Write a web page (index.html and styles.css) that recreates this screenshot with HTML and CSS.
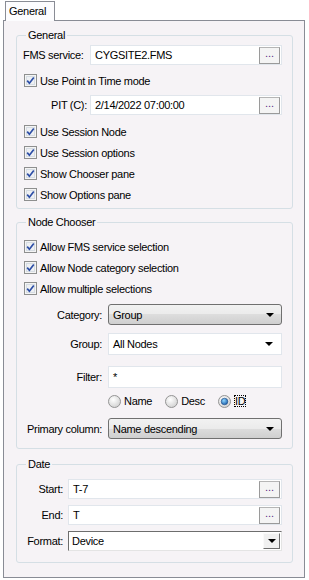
FILE: index.html
```html
<!DOCTYPE html>
<html>
<head>
  <title>Options</title>
  <link rel="stylesheet" href="styles.css">
</head>
<body>
  <div class="tabs">
    <div class="tab active">General</div>
  </div>
  <div class="panel">
    <fieldset class="group general">
      <legend>General</legend>
      <div class="row edit-row">
        <label class="lbl lbl-left">FMS service:</label>
        <div class="edit">
          <span class="value">CYGSITE2.FMS</span>
          <button class="dots">...</button>
        </div>
      </div>
      <div class="check-row first-check">
        <svg class="cb" width="13" height="13" viewBox="0 0 13 13"><rect x="0.5" y="0.5" width="12" height="12" fill="#f4f4f4" stroke="#8e8f8f"/><rect x="2.5" y="2.5" width="8" height="8" fill="#eef0f3" stroke="#d6dce3"/><path d="M3.2 6.6 L5.4 9.2 L9.8 3.4" fill="none" stroke="#2d4ea6" stroke-width="1.7"/></svg>
        <span>Use Point in Time mode</span>
      </div>
      <div class="row edit-row">
        <label class="lbl lbl-right">PIT (C):</label>
        <div class="edit">
          <span class="value">2/14/2022 07:00:00</span>
          <button class="dots">...</button>
        </div>
      </div>
      <div class="check-list">
        <div class="check-row">
          <svg class="cb" width="13" height="13" viewBox="0 0 13 13"><rect x="0.5" y="0.5" width="12" height="12" fill="#f4f4f4" stroke="#8e8f8f"/><rect x="2.5" y="2.5" width="8" height="8" fill="#eef0f3" stroke="#d6dce3"/><path d="M3.2 6.6 L5.4 9.2 L9.8 3.4" fill="none" stroke="#2d4ea6" stroke-width="1.7"/></svg>
          <span>Use Session Node</span>
        </div>
        <div class="check-row">
          <svg class="cb" width="13" height="13" viewBox="0 0 13 13"><rect x="0.5" y="0.5" width="12" height="12" fill="#f4f4f4" stroke="#8e8f8f"/><rect x="2.5" y="2.5" width="8" height="8" fill="#eef0f3" stroke="#d6dce3"/><path d="M3.2 6.6 L5.4 9.2 L9.8 3.4" fill="none" stroke="#2d4ea6" stroke-width="1.7"/></svg>
          <span>Use Session options</span>
        </div>
        <div class="check-row">
          <svg class="cb" width="13" height="13" viewBox="0 0 13 13"><rect x="0.5" y="0.5" width="12" height="12" fill="#f4f4f4" stroke="#8e8f8f"/><rect x="2.5" y="2.5" width="8" height="8" fill="#eef0f3" stroke="#d6dce3"/><path d="M3.2 6.6 L5.4 9.2 L9.8 3.4" fill="none" stroke="#2d4ea6" stroke-width="1.7"/></svg>
          <span>Show Chooser pane</span>
        </div>
        <div class="check-row">
          <svg class="cb" width="13" height="13" viewBox="0 0 13 13"><rect x="0.5" y="0.5" width="12" height="12" fill="#f4f4f4" stroke="#8e8f8f"/><rect x="2.5" y="2.5" width="8" height="8" fill="#eef0f3" stroke="#d6dce3"/><path d="M3.2 6.6 L5.4 9.2 L9.8 3.4" fill="none" stroke="#2d4ea6" stroke-width="1.7"/></svg>
          <span>Show Options pane</span>
        </div>
      </div>
    </fieldset>

    <fieldset class="group chooser">
      <legend>Node Chooser</legend>
      <div class="check-list">
        <div class="check-row">
          <svg class="cb" width="13" height="13" viewBox="0 0 13 13"><rect x="0.5" y="0.5" width="12" height="12" fill="#f4f4f4" stroke="#8e8f8f"/><rect x="2.5" y="2.5" width="8" height="8" fill="#eef0f3" stroke="#d6dce3"/><path d="M3.2 6.6 L5.4 9.2 L9.8 3.4" fill="none" stroke="#2d4ea6" stroke-width="1.7"/></svg>
          <span>Allow FMS service selection</span>
        </div>
        <div class="check-row">
          <svg class="cb" width="13" height="13" viewBox="0 0 13 13"><rect x="0.5" y="0.5" width="12" height="12" fill="#f4f4f4" stroke="#8e8f8f"/><rect x="2.5" y="2.5" width="8" height="8" fill="#eef0f3" stroke="#d6dce3"/><path d="M3.2 6.6 L5.4 9.2 L9.8 3.4" fill="none" stroke="#2d4ea6" stroke-width="1.7"/></svg>
          <span>Allow Node category selection</span>
        </div>
        <div class="check-row">
          <svg class="cb" width="13" height="13" viewBox="0 0 13 13"><rect x="0.5" y="0.5" width="12" height="12" fill="#f4f4f4" stroke="#8e8f8f"/><rect x="2.5" y="2.5" width="8" height="8" fill="#eef0f3" stroke="#d6dce3"/><path d="M3.2 6.6 L5.4 9.2 L9.8 3.4" fill="none" stroke="#2d4ea6" stroke-width="1.7"/></svg>
          <span>Allow multiple selections</span>
        </div>
      </div>
      <div class="row category-row">
        <label class="lbl lbl-wide">Category:</label>
        <div class="dropbtn"><span class="value">Group</span><span class="arrow"></span></div>
      </div>
      <div class="row group-row">
        <label class="lbl lbl-wide">Group:</label>
        <div class="combo"><span class="value">All Nodes</span><span class="arrow"></span></div>
      </div>
      <div class="row filter-row">
        <label class="lbl lbl-wide">Filter:</label>
        <div class="edit tall"><span class="value">*</span></div>
      </div>
      <div class="radio-row">
        <div class="radio">
          <svg width="13" height="13" viewBox="0 0 13 13"><defs><radialGradient id="rg" cx="0.4" cy="0.35" r="0.7"><stop offset="0" stop-color="#ffffff"/><stop offset="1" stop-color="#d0d0d0"/></radialGradient></defs><circle cx="6.5" cy="6.5" r="6" fill="url(#rg)" stroke="#949494"/></svg>
          <span>Name</span>
        </div>
        <div class="radio">
          <svg width="13" height="13" viewBox="0 0 13 13"><circle cx="6.5" cy="6.5" r="6" fill="url(#rg)" stroke="#949494"/></svg>
          <span>Desc</span>
        </div>
        <div class="radio">
          <svg width="13" height="13" viewBox="0 0 13 13"><defs><radialGradient id="rb" cx="0.4" cy="0.35" r="0.7"><stop offset="0" stop-color="#8fd6ff"/><stop offset="1" stop-color="#1559a8"/></radialGradient></defs><circle cx="6.5" cy="6.5" r="6" fill="url(#rg)" stroke="#949494"/><circle cx="6.5" cy="6.5" r="3.3" fill="url(#rb)" stroke="#1d4a82" stroke-width="0.6"/></svg>
          <span class="focus">ID</span>
        </div>
      </div>
      <div class="row primary-row">
        <label class="lbl lbl-wide">Primary column:</label>
        <div class="dropbtn"><span class="value">Name descending</span><span class="arrow"></span></div>
      </div>
    </fieldset>

    <fieldset class="group date">
      <legend>Date</legend>
      <div class="row date-row">
        <label class="lbl lbl-short">Start:</label>
        <div class="edit">
          <span class="value">T-7</span>
          <button class="dots">...</button>
        </div>
      </div>
      <div class="row date-row">
        <label class="lbl lbl-short">End:</label>
        <div class="edit">
          <span class="value">T</span>
          <button class="dots">...</button>
        </div>
      </div>
      <div class="row date-row">
        <label class="lbl lbl-short">Format:</label>
        <div class="sunken">
          <span class="value">Device</span>
          <span class="drop"><span class="arrow"></span></span>
        </div>
      </div>
    </fieldset>
  </div>
</body>
</html>
```

FILE: styles.css
```css
body {
  margin: 0;
  padding: 1px 0 0 3px;
  background: white;
  font-family: "Liberation Sans", Arial, sans-serif;
  font-size: 11px;
  letter-spacing: -0.3px;
  color: #000;
}
.tabs {
  display: flex;
  padding-left: 2px;
}
.tab {
  position: relative;
  z-index: 1;
  height: 19px;
  line-height: 18px;
  padding: 0 8px 0 3px;
  border: 1px solid #898c95;
  border-bottom: none;
  background: #fcfcfe;
  margin-bottom: -1px;
}
.panel {
  border: 1px solid #898c95;
  background: #f6f3f6;
  padding: 8px 11px 0 12px;
  box-sizing: border-box;
  width: 302px;
  height: 558px;
  display: flex;
  flex-direction: column;
}
.group {
  margin: 0;
  border: 1px solid #d5dfe5;
  border-radius: 3px;
  padding: 3px 10px 3px 6px;
  min-width: 0;
}
.group legend {
  padding: 0 2px;
  margin-left: 3px;
  line-height: 13px;
}
.chooser {
  margin-top: 7px;
  padding-top: 7px;
  padding-bottom: 9px;
}
.date {
  margin-top: 9px;
  padding-top: 8px;
  padding-bottom: 11px;
}
.row {
  display: flex;
  align-items: center;
}
.lbl {
  flex: none;
  box-sizing: border-box;
}
.lbl-left {
  width: 67px;
}
.lbl-right {
  width: 67px;
  text-align: right;
  padding-right: 3px;
}
.lbl-wide {
  width: 85px;
  text-align: right;
  padding-right: 6px;
}
.lbl-short {
  width: 45px;
  text-align: right;
  padding-right: 5px;
}
.edit {
  flex: 1;
  height: 20px;
  box-sizing: border-box;
  display: flex;
  align-items: center;
  background: white;
  border: 1px solid #e1e6ec;
  padding: 0 1px 0 4px;
}
.edit.tall {
  height: 22px;
}
.value {
  flex: 1;
}
.dots {
  width: 21px;
  height: 17px;
  padding: 0 0 4px;
  border: 1px solid #9a9a9a;
  border-top-color: #b5b5b5;
  background: #f4f4f4;
  color: #5b2d86;
  font-family: "Liberation Sans", Arial, sans-serif;
  font-size: 11px;
  letter-spacing: 0;
  line-height: 10px;
}
.first-check {
  margin-top: 5px;
}
.edit-row + .check-row {
  margin-top: 5px;
}
.check-row + .edit-row {
  margin-top: 4px;
}
.check-list {
  margin-top: 6px;
}
.chooser .check-list {
  margin-top: 0;
}
.check-row {
  display: flex;
  align-items: center;
  height: 21px;
  padding-left: 1px;
  gap: 3px;
}
.cb {
  flex: none;
}
.arrow {
  width: 0;
  height: 0;
  border-left: 4px solid transparent;
  border-right: 4px solid transparent;
  border-top: 4px solid #000;
}
.dropbtn {
  flex: 1;
  height: 21px;
  box-sizing: border-box;
  display: flex;
  align-items: center;
  padding: 0 7px 0 4px;
  border: 1px solid #707070;
  border-radius: 3px;
  background: linear-gradient(#f2f2f2, #ebebeb 50%, #dddddd 50%, #cfcfcf);
}
.category-row {
  margin-top: 5px;
}
.combo {
  flex: 1;
  height: 22px;
  box-sizing: border-box;
  display: flex;
  align-items: center;
  padding: 0 8px 0 4px;
  background: white;
  border: 1px solid #e1e6ec;
}
.group-row {
  margin-top: 8px;
}
.filter-row {
  margin-top: 11px;
}
.radio-row {
  display: flex;
  align-items: center;
  height: 16px;
  margin: 5px 0 0 85px;
  gap: 13px;
}
.radio {
  display: flex;
  align-items: center;
  gap: 3px;
}
.radio svg {
  flex: none;
}
.focus {
  outline: 1px dotted #000;
  outline-offset: -1px;
  padding: 0 1px;
}
.primary-row {
  margin-top: 9px;
}
.date-row + .date-row {
  margin-top: 6px;
}
.sunken {
  flex: 1;
  height: 20px;
  box-sizing: border-box;
  display: flex;
  align-items: center;
  padding: 0 1px 0 3px;
  background: white;
  border: 1px solid #e4e4e4;
  border-top-color: #6d6d6d;
  border-left-color: #6d6d6d;
}
.drop {
  width: 17px;
  height: 16px;
  box-sizing: border-box;
  display: flex;
  align-items: center;
  justify-content: center;
  background: #f0f0f0;
  border: 1px solid #6d6d6d;
  border-top-color: #fafafa;
  border-left-color: #fafafa;
}
```
